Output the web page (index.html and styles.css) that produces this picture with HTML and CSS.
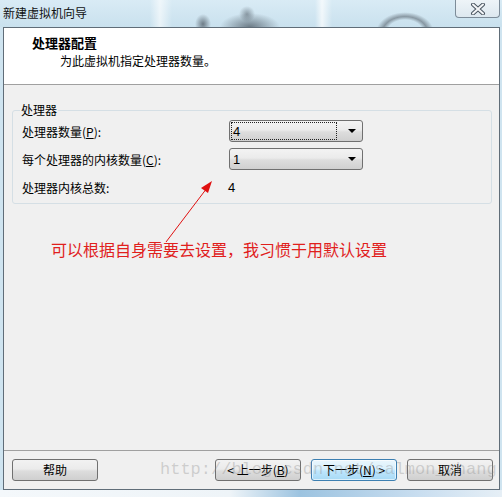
FILE: index.html
```html
<!DOCTYPE html>
<html lang="zh">
<head>
<meta charset="utf-8">
<link rel="stylesheet" href="styles.css">
</head>
<body>
<div class="titlebar">
  <span class="title">新建虚拟机向导</span>
  <div class="close">
    <svg width="20" height="12" viewBox="0 0 20 12">
      <path d="M5 1.5 L15 10.5 M15 1.5 L5 10.5" stroke="#4a5560" stroke-width="4" stroke-linecap="round"/>
      <path d="M5 1.5 L15 10.5 M15 1.5 L5 10.5" stroke="#f4f6f8" stroke-width="2" stroke-linecap="round"/>
    </svg>
  </div>
</div>
<div class="window">
  <div class="header">
    <div class="heading">处理器配置</div>
    <div class="subtitle">为此虚拟机指定处理器数量。</div>
  </div>
  <div class="content">
    <fieldset class="group">
      <legend>处理器</legend>
      <div class="row">
        <span class="label">处理器数量(<u>P</u>):</span>
        <div class="select"><span class="value focus">4</span><span class="arrow"></span></div>
      </div>
      <div class="row">
        <span class="label">每个处理器的内核数量(<u>C</u>):</span>
        <div class="select"><span class="value">1</span><span class="arrow"></span></div>
      </div>
      <div class="row">
        <span class="label">处理器内核总数:</span>
        <span class="total">4</span>
      </div>
    </fieldset>
    <p class="note">可以根据自身需要去设置，我习惯于用默认设置</p>
    <svg class="pointer" width="80" height="70" viewBox="0 0 80 70">
      <line x1="9" y1="66" x2="50" y2="12" stroke="#e01010" stroke-width="1"/>
      <polygon points="55,5 44,12 51,17" fill="#e01010"/>
    </svg>
  </div>
  <div class="footer">
    <button class="btn">帮助</button>
    <div class="spacer"></div>
    <button class="btn">&lt; 上一步(<u>B</u>)</button>
    <button class="btn default">下一步(<u>N</u>) &gt;</button>
    <button class="btn">取消</button>
    <span class="watermark">http://blog.csdn.net/salmon_zhang</span>
  </div>
</div>
<div class="below"></div>
</body>
</html>
```
FILE: styles.css
```css
* { box-sizing: border-box; }
html, body {
  margin: 0;
  padding: 0;
  width: 502px;
  height: 497px;
  overflow: hidden;
}
body {
  font-family: "Noto Sans CJK SC", "Microsoft YaHei", sans-serif;
  font-size: 12px;
  color: #000;
  background: #cfe4f0;
}
.titlebar {
  height: 27px;
  display: flex;
  align-items: flex-start;
  position: relative;
  background:
    radial-gradient(ellipse 8px 10px at 203px 24px, rgba(70,80,90,0.7), rgba(70,80,90,0) 100%),
    radial-gradient(ellipse 30px 14px at 250px 27px, rgba(60,70,80,0.65), rgba(60,70,80,0) 100%),
    radial-gradient(ellipse 8px 8px at 247px 14px, rgba(70,80,90,0.5), rgba(70,80,90,0) 100%),
    radial-gradient(ellipse 32px 22px at 405px 32px, rgba(255,255,255,0) 55%, rgba(80,90,100,0.55) 70%, rgba(80,90,100,0) 90%),
    linear-gradient(90deg, rgba(255,255,255,0) 150px, rgba(255,255,255,0.6) 160px, rgba(255,255,255,0) 172px, rgba(255,255,255,0) 315px, rgba(255,255,255,0.7) 322px, rgba(255,255,255,0) 332px),
    linear-gradient(180deg, #d9ebf5, #c9e1ee);
}
.title {
  padding: 3px 0 0 3px;
  line-height: 20px;
  font-size: 12px;
  color: #111;
}
.close {
  position: absolute;
  right: 2px;
  top: 0;
  width: 45px;
  height: 18px;
  border: 1px solid #7d8c99;
  border-top: none;
  border-radius: 0 0 4px 4px;
  background: linear-gradient(180deg, #eef4f8, #dde8ef);
  display: flex;
  align-items: center;
  justify-content: center;
}
.window {
  margin: 0 3px 0 3px;
  width: 497px;
  border: 1px solid #606d78;
  background: #f0f0f0;
  position: relative;
}
.header {
  height: 57px;
  background: #fff;
  border-bottom: 1px solid #a0a0a0;
  padding: 7px 0 0 28px;
}
.heading {
  font-weight: bold;
  font-size: 13px;
  line-height: 16px;
}
.subtitle {
  margin: 2px 0 0 28px;
  line-height: 16px;
}
.content {
  height: 365px;
  padding: 17px 7px 0 8px;
  position: relative;
}
.group {
  margin: 0;
  padding: 2px 9px 5px 9px;
  border: 1px solid #d5dfe5;
  border-radius: 3px;
  min-width: 0;
}
.group legend {
  padding: 0 1px;
  margin-left: -2px;
  line-height: 16px;
  font-size: 12px;
}
.row {
  display: flex;
  align-items: center;
  height: 22px;
  margin-bottom: 6px;
}
.row:last-child { margin-bottom: 0; }
.label {
  width: 207px;
  flex: none;
}
u { text-decoration: underline; text-underline-offset: 1px; }
.select {
  width: 134px;
  height: 22px;
  border: 1px solid #707070;
  border-radius: 3px;
  background: linear-gradient(180deg, #f3f3f3 0%, #ebebeb 45%, #dddddd 55%, #d0d0d0 100%);
  display: flex;
  align-items: center;
  padding: 0 6px 0 1px;
}
.value {
  flex: 1;
  height: 18px;
  line-height: 17px;
  padding-left: 1px;
  font-family: "Liberation Sans", Arial, sans-serif;
  font-size: 13px;
  border: 1px dotted transparent;
  margin-right: 11px;
}
.value.focus { border-color: #222; }
.arrow {
  width: 0;
  height: 0;
  border-left: 4px solid transparent;
  border-right: 4px solid transparent;
  border-top: 4px solid #000;
}
.total {
  font-family: "Liberation Sans", Arial, sans-serif;
  font-size: 13px;
  padding-left: -1px;
  margin-left: -1px;
}
.note {
  margin: 34px 0 0 39px;
  color: #e0201c;
  font-size: 16px;
  line-height: 22px;
}
.pointer {
  position: absolute;
  left: 153px;
  top: 91px;
}
.footer {
  height: 39px;
  border-top: 1px solid #a0a0a0;
  display: flex;
  align-items: flex-start;
  padding: 8px 6px 0 8px;
  gap: 10px;
  position: relative;
}
.spacer { flex: 1; }
.btn {
  width: 86px;
  height: 22px;
  margin: 0;
  padding: 0;
  border: 1px solid #707070;
  border-radius: 3px;
  background: linear-gradient(180deg, #f2f2f2 0%, #ebebeb 45%, #dddddd 55%, #cfcfcf 100%);
  font-family: "Noto Sans CJK SC", "Microsoft YaHei", sans-serif;
  font-size: 12px;
  line-height: 18px;
  color: #000;
}
.btn.default {
  border-color: #3c7fb1;
  background: linear-gradient(180deg, #eaf6fd 0%, #d9f0fc 45%, #bee6fd 55%, #a7d9f5 100%);
  box-shadow: inset 0 0 0 1px rgba(255,255,255,0.6);
}
.watermark {
  position: absolute;
  left: 156px;
  top: 8px;
  font-family: "Liberation Mono", "Courier New", monospace;
  font-size: 17px;
  line-height: 22px;
  color: rgba(140,140,140,0.35);
  pointer-events: none;
  white-space: nowrap;
}
.below {
  height: 10px;
  background: linear-gradient(90deg, #f4f8fb 0px, #eef4f8 230px, #9cc3e0 300px, #c9def0 420px, #e6eff6 502px);
}
```
